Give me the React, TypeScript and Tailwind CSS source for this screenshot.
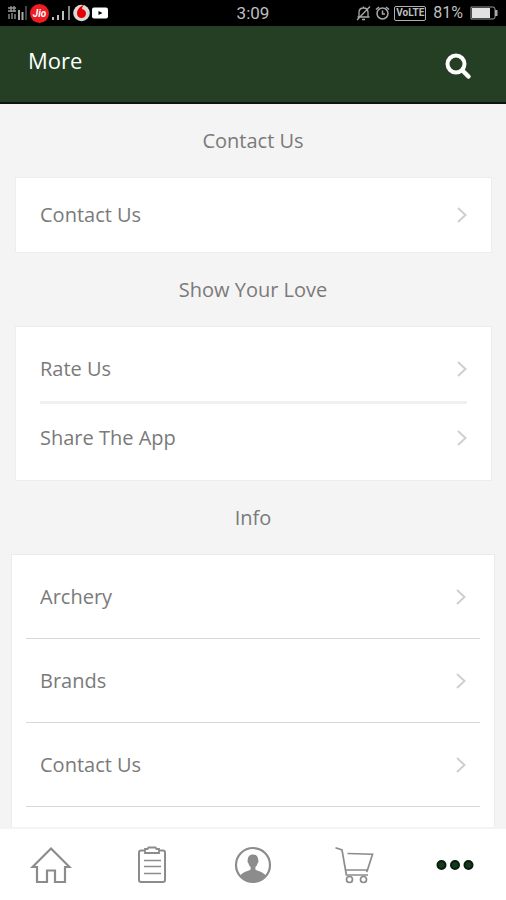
import React from 'react';

const showLoveLinks = ['Rate Us', 'Share The App'];
const infoLinks = ['Archery', 'Brands', 'Contact Us'];

const Chevron: React.FC = () => (
    <svg width="10" height="16" viewBox="0 0 10 16" fill="none" stroke="#cfcfcf" strokeWidth="2" aria-hidden="true">
        <path d="M1 1l7.500 7L1 15" />
    </svg>
);

const HomeIcon: React.FC = () => (
    <svg width="42" height="40" viewBox="0 0 42 40" fill="none" stroke="#8c8c8c" strokeWidth="2.200" aria-hidden="true">
        <path d="M21 3.500L2.500 22h4.500v15h10V25.500h8V37h10V22h4.500z" />
    </svg>
);

const OrdersIcon: React.FC = () => (
    <svg width="30" height="40" viewBox="0 0 30 40" fill="none" stroke="#8c8c8c" strokeWidth="2" aria-hidden="true">
        <path d="M8 5.500H4a2 2 0 0 0-2 2V35a2 2 0 0 0 2 2h22a2 2 0 0 0 2-2V7.500a2 2 0 0 0-2-2h-4" />
        <path d="M8 4h2.500l1-1.500h7l1 1.500H22v4H8z" strokeWidth="1.800" />
        <path d="M7 15.500h17M7 21.500h17M7 28.500h17" strokeWidth="1.600" />
    </svg>
);

const AccountIcon: React.FC = () => (
    <svg width="38" height="38" viewBox="0 0 38 38" aria-hidden="true">
        <circle cx="19" cy="19" r="17" fill="none" stroke="#8c8c8c" strokeWidth="2.200" />
        <path
            d="M19 8.500c-3.400 0-5.300 2.300-5.200 5.400-.6.600-.3 2.300.5 3.100.5 2 1.200 3 2.300 4v2.400c-1.200 1.200-7.800 2.100-10.400 6.200C9.200 33.500 13.800 36 19 36s9.800-2.500 12.800-6.400c-2.600-4.100-9.200-5-10.400-6.200V21c1.100-1 1.800-2 2.300-4 .8-.8 1.100-2.500.5-3.100.1-3.100-1.800-5.400-5.200-5.400z"
            fill="#8c8c8c"
        />
    </svg>
);

const CartIcon: React.FC = () => (
    <svg width="40" height="40" viewBox="0 0 40 40" fill="none" stroke="#8c8c8c" strokeWidth="1.700" aria-hidden="true">
        <path d="M1.500 2.800l6.500 2.200 4.300 24.500" />
        <path d="M13.500 8.500L38.500 9.200 33.500 25H12M11.500 30H34M33.500 25l-1 2" />
        <circle cx="15.500" cy="34.500" r="3" />
        <circle cx="29.500" cy="34.500" r="3" />
    </svg>
);

const MoreIcon: React.FC = () => (
    <svg width="38" height="12" viewBox="0 0 38 12" fill="#123a1c" stroke="#0a1c0d" strokeWidth="2" aria-hidden="true">
        <circle cx="5.500" cy="6" r="4" />
        <circle cx="19" cy="6" r="4" />
        <circle cx="32.500" cy="6" r="4" />
    </svg>
);

const tabs = [
    { label: 'Home', icon: <HomeIcon /> },
    { label: 'Orders', icon: <OrdersIcon /> },
    { label: 'Account', icon: <AccountIcon /> },
    { label: 'Cart', icon: <CartIcon /> },
    { label: 'More', icon: <MoreIcon /> },
];

const StatusBar: React.FC = () => (
    <div className="grid h-[26px] shrink-0 grid-cols-[1fr_auto_1fr] items-center bg-black px-[7px] font-[Roboto,sans-serif] text-[#bfbfbf]">
        <div className="flex items-center gap-[2px]">
            <svg width="21" height="16" viewBox="0 0 21 16" aria-hidden="true">
                <path d="M1 3h8M4 1v6M7 1v6M1 6h8M2 9v5M5 8v6M8 9v5" stroke="#999" strokeWidth="1.300" />
                <path d="M12 5v10M15.500 7v8" stroke="#aaa" strokeWidth="2" />
                <path d="M19 1v14" stroke="#444" strokeWidth="2" />
            </svg>
            <span className="flex size-[19px] items-center justify-center rounded-full bg-[#ee1c25] text-[10px] font-bold italic text-white">
                Jio
            </span>
            <svg width="20" height="16" viewBox="0 0 20 16" fill="#bdbdbd" aria-hidden="true">
                <path d="M1 12h2v3H1zM6 10h2v5H6zM11 6h2v9h-2z" />
                <path d="M17 1h2v14h-2z" fill="#858585" />
            </svg>
            <svg width="17" height="18" viewBox="0 0 17 18" aria-hidden="true">
                <circle cx="8.500" cy="9" r="8.300" fill="#d9d9d9" />
                <path d="M11 1C8 1.500 4 5 4 9.500a4.500 4.500 0 0 0 9 0C13 7 11 5.500 9 5c0-2 1-3 2-4z" fill="#e60000" />
            </svg>
            <svg width="16" height="12" viewBox="0 0 16 12" aria-hidden="true">
                <rect y="0.500" width="16" height="11" rx="2" fill="#fff" />
                <path d="M6.500 4l4 2-4 2z" fill="#000" />
            </svg>
        </div>
        <span className="text-[17px] leading-none">3:09</span>
        <div className="flex items-center justify-end gap-1">
            <svg width="15" height="16" viewBox="0 0 15 16" fill="none" stroke="#a8a8a8" strokeWidth="1.300" aria-hidden="true">
                <path d="M3 12V7.500C3 5 4.500 3 7.500 3S12 5 12 7.500V12h1.500H1.500zM6 14.500h3M7.500 3V1.500M1 15L14 1.500" />
            </svg>
            <svg width="15" height="16" viewBox="0 0 15 16" fill="none" stroke="#a8a8a8" strokeWidth="1.500" aria-hidden="true">
                <circle cx="7.500" cy="8.500" r="5.500" />
                <path d="M7.500 5.500V9H10M1 4.500l3-2.500M14 4.500L11 2" />
            </svg>
            <span className="flex h-[15px] items-center rounded-xs border border-[#b0b0b0] px-px text-[10px] font-bold leading-none">
                VoLTE
            </span>
            <span className="px-[3px] text-[16px] leading-none">81%</span>
            <svg width="29" height="14" viewBox="0 0 29 14" aria-hidden="true">
                <path d="M1 1h22a2 2 0 0 1 2 2v8a2 2 0 0 1-2 2H1z" fill="none" stroke="#999" />
                <path d="M2 2h18v10H2z" fill="#e2e2e2" />
                <path d="M25 4h2.500v6H25z" fill="#aaa" />
            </svg>
        </div>
    </div>
);

const SectionTitle: React.FC<{ children: React.ReactNode }> = ({ children }) => (
    <h2 className="flex h-[73px] shrink-0 items-center justify-center text-[20px] text-[#7a7a7a]">{children}</h2>
);

const Row: React.FC<{ label: string; className: string }> = ({ label, className }) => (
    <a href="#" className={`flex items-center justify-between text-[20px] text-[#7a7a7a] ${className}`}>
        {label}
        <Chevron />
    </a>
);

const App: React.FC = () => {
    return (
        <div className="flex h-screen flex-col bg-[#f4f4f4] font-['Open_Sans','Noto_Sans',sans-serif]">
            <StatusBar />
            <header className="flex h-[78px] shrink-0 items-center justify-between border-b-2 border-[#0b160c] bg-[#243f24] pr-[34px] pl-7">
                <h1 className="pb-2 text-[22px] text-white">More</h1>
                <button aria-label="Search" className="pt-1">
                    <svg width="28" height="28" viewBox="0 0 28 28" fill="none" stroke="#fff" aria-hidden="true">
                        <circle cx="12" cy="12" r="8.500" strokeWidth="4" />
                        <path d="M18.500 18.500l6 6" strokeWidth="4.500" strokeLinecap="round" />
                    </svg>
                </button>
            </header>

            <main className="flex min-h-0 flex-1 flex-col overflow-y-auto">
                <SectionTitle>Contact Us</SectionTitle>
                <section className="mr-3.5 ml-[15px] shrink-0 border border-[#ededed] bg-white px-6">
                    <Row label="Contact Us" className="h-[74px]" />
                </section>

                <SectionTitle>Show Your Love</SectionTitle>
                <section className="mr-3.5 ml-[15px] shrink-0 divide-y-3 divide-[#f0f0f0] border border-[#ededed] bg-white px-6 pt-2.5 pb-[9px]">
                    {showLoveLinks.map((label) => (
                        <Row key={label} label={label} className="h-[67px]" />
                    ))}
                </section>

                <SectionTitle>Info</SectionTitle>
                <section className="mx-[11px] flex-1 border border-b-0 border-[#ebebeb] bg-white px-3.5">
                    {infoLinks.map((label) => (
                        <Row key={label} label={label} className="h-[84px] border-b border-[#d8d8d8] px-3.5" />
                    ))}
                </section>
            </main>

            <nav className="grid h-[73px] shrink-0 grid-cols-5 border-t-2 border-[#f4f4f4] bg-white">
                {tabs.map((tab) => (
                    <button key={tab.label} aria-label={tab.label} className="flex items-center justify-center">
                        {tab.icon}
                    </button>
                ))}
            </nav>
        </div>
    );
};

export default App;
